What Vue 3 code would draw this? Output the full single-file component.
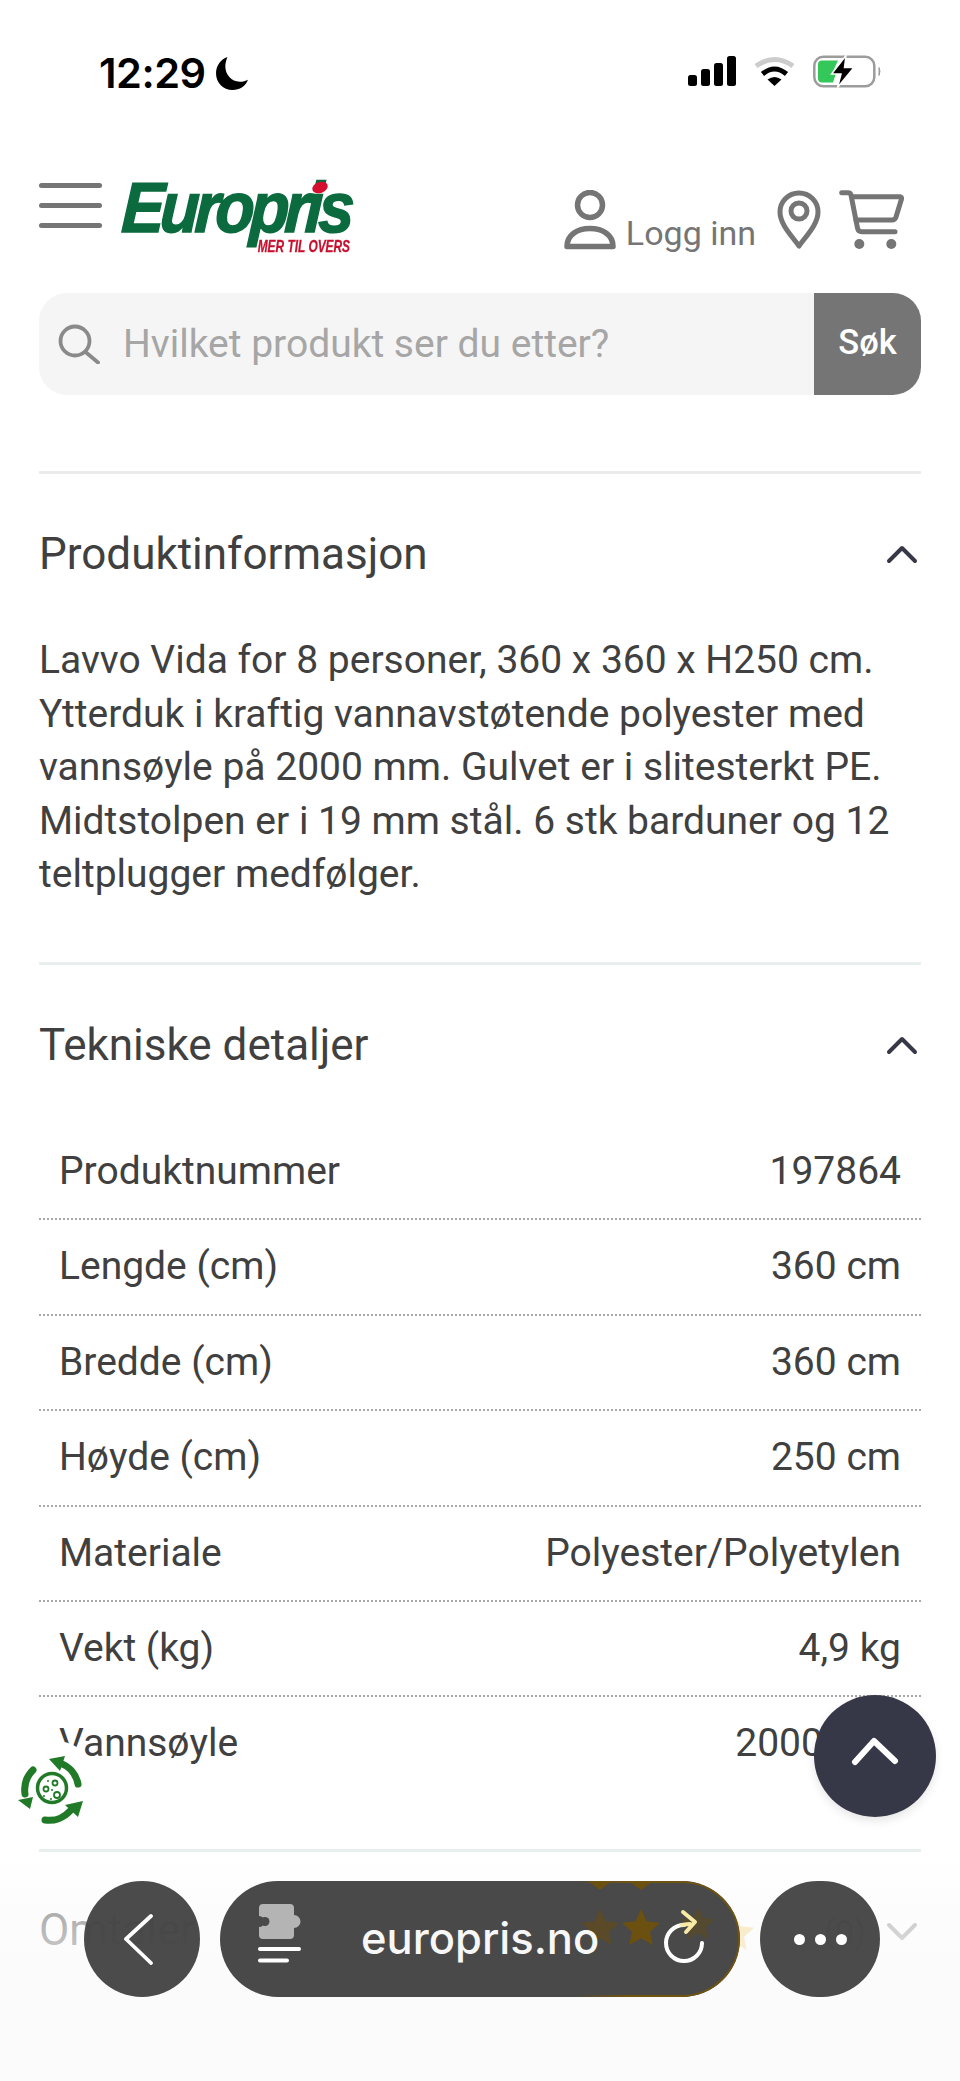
<script setup>
const specs = [
  ['Produktnummer', '197864'],
  ['Lengde (cm)', '360 cm'],
  ['Bredde (cm)', '360 cm'],
  ['Høyde (cm)', '250 cm'],
  ['Materiale', 'Polyester/Polyetylen'],
  ['Vekt (kg)', '4,9 kg'],
  ['Vannsøyle', '2000 mm'],
]
const starPath = 'M20 1l5.6 12.2 13.4 1.5-10 9 2.8 13.2L20 30.2 8.2 36.9 11 23.7 1 14.7l13.4-1.5z'
</script>

<template>
  <div class="page">
    <div class="status">
      <div class="status-left">
        <span class="time">12:29</span>
        <svg class="moon" viewBox="0 0 34 34"><path d="M12 1C6 3 1 9 1 17c0 9 7 16 16 16 7 0 13-4 15-10-2 1-5 2-8 2-8 0-14-7-14-15 0-3 1-6 2-9z" fill="#000"/></svg>
      </div>
      <div class="status-right">
        <svg class="signal" viewBox="0 0 48 30" fill="#000">
          <rect x="0" y="19" width="9" height="11" rx="2.5"/>
          <rect x="13" y="13" width="9" height="17" rx="2.5"/>
          <rect x="26" y="7" width="9" height="23" rx="2.5"/>
          <rect x="39" y="0" width="9" height="30" rx="2.5"/>
        </svg>
        <svg class="wifi" viewBox="0 0 41 30">
          <path d="M2 10Q20.500 -3 39 10" fill="none" stroke="#ccc" stroke-width="5"/>
          <path d="M8.500 18Q20.500 8 32.500 18" fill="none" stroke="#000" stroke-width="5"/>
          <path d="M13.500 23.500Q20.500 18.500 27.500 23.500L20.500 30z" fill="#000"/>
        </svg>
        <svg class="battery" viewBox="0 0 68 33">
          <rect x="1.300" y="1.800" width="60" height="29.500" rx="9" fill="none" stroke="#9c9c9c" stroke-width="2.500"/>
          <path d="M66 12.500q2 3.500 0 8z" fill="#9c9c9c" stroke="#9c9c9c"/>
          <path d="M9 5.500h16l-6 13h4l-3 9H9q-4 0-4-4v-14q0-4 4-4z" fill="#34c759"/>
          <path d="M33 .5 18.500 19H28l-3.500 13.500L41 12.500h-9.500z" fill="#000" stroke="#fff" stroke-width="1.500"/>
        </svg>
      </div>
    </div>

    <header class="head">
      <div class="burger"><i></i><i></i><i></i></div>
      <div class="logo">
        <span class="logo-word">Europris</span>
        <b class="logo-dot"></b>
        <span class="logo-tag">MER TIL OVERS</span>
      </div>
      <div class="head-tools">
        <svg class="ico-user" viewBox="0 0 52 60" fill="none" stroke="#757575" stroke-width="5.500" stroke-linejoin="round">
          <circle cx="26" cy="15" r="12.500"/>
          <path d="M3 56.500C3 45 13 38.500 26 38.500S49 45 49 56.500z"/>
        </svg>
        <span class="login">Logg inn</span>
        <svg class="ico-pin" viewBox="0 0 44 60" fill="none" stroke="#757575" stroke-width="5" stroke-linejoin="round">
          <path d="M22 56C14 45 3 34 3 22a19 19 0 0 1 38 0c0 12-11 23-19 34z"/>
          <circle cx="22" cy="21" r="8"/>
        </svg>
        <svg class="ico-cart" viewBox="0 0 68 60" fill="none" stroke="#757575" stroke-width="5" stroke-linecap="round" stroke-linejoin="round">
          <path d="M3.700 2.700H10q2.500 0 3 2.300l6.500 33q.5 3.700 4.500 3.700h33"/>
          <path d="M14 6.700h48q2 0 1.500 2.300L58 27q-1 3-4 3H18"/>
          <circle cx="21.300" cy="54" r="5" fill="#757575" stroke="none"/>
          <circle cx="53.300" cy="54" r="5" fill="#757575" stroke="none"/>
        </svg>
      </div>
    </header>

    <div class="search">
      <div class="search-field">
        <svg class="ico-search" viewBox="0 0 42 40" fill="none" stroke="#8a8a8a" stroke-width="3.800" stroke-linecap="round">
          <circle cx="17" cy="17" r="14.500"/>
          <path d="M27.500 28 40 38.500"/>
        </svg>
        <span class="placeholder">Hvilket produkt ser du etter?</span>
      </div>
      <div class="search-btn">Søk</div>
    </div>

    <section class="sec sec-info">
      <div class="sec-head">
        <h2>Produktinformasjon</h2>
        <svg class="chev" viewBox="0 0 32 20" fill="none" stroke="#363848" stroke-width="4" stroke-linecap="round" stroke-linejoin="round"><path d="M3 17 16 4l13 13"/></svg>
      </div>
      <p class="body">Lavvo Vida for 8 personer, 360 x 360 x H250 cm. Ytterduk i kraftig vannavstøtende polyester med vannsøyle på 2000 mm. Gulvet er i slitesterkt PE. Midtstolpen er i 19 mm stål. 6 stk barduner og 12 teltplugger medfølger.</p>
    </section>

    <section class="sec sec-tech">
      <div class="sec-head">
        <h2>Tekniske detaljer</h2>
        <svg class="chev" viewBox="0 0 32 20" fill="none" stroke="#363848" stroke-width="4" stroke-linecap="round" stroke-linejoin="round"><path d="M3 17 16 4l13 13"/></svg>
      </div>
      <div class="table">
        <div v-for="row in specs" :key="row[0]" class="row">
          <span>{{ row[0] }}</span>
          <span>{{ row[1] }}</span>
        </div>
      </div>
    </section>

    <section class="sec sec-review">
      <span class="review-title">Omtaler</span>
      <div class="review-right">
        <svg v-for="n in 5" :key="n" class="star" viewBox="0 0 40 38"><path :d="starPath" fill="#f6d27a"/></svg>
        <span class="review-count">(0)</span>
        <svg class="chev-down" viewBox="0 0 32 20" fill="none" stroke="#888" stroke-width="4" stroke-linecap="round" stroke-linejoin="round"><path d="M3 3l13 13L29 3"/></svg>
      </div>
    </section>

    <div class="eco">
      <svg viewBox="0 0 90 90" width="90" height="90">
        <g fill="none" stroke="#217a28" stroke-linecap="round">
          <path d="M68 44A28 28 0 0 0 50 23" stroke-width="7"/>
          <path d="M23 30A28 28 0 0 0 15 54" stroke-width="7"/>
          <path d="M35 80A28 28 0 0 0 60 71" stroke-width="7"/>
          <circle cx="42" cy="48" r="14.500" stroke-width="3.500"/>
          <circle cx="36" cy="49" r="2.500" stroke-width="1.800"/>
          <circle cx="45" cy="43" r="2.500" stroke-width="1.800"/>
          <circle cx="47" cy="55" r="3" stroke-width="1.800"/>
        </g>
        <g fill="#217a28">
          <path d="M39 19 55 16 50 31z"/>
          <path d="M8 60 23 57 20 69z"/>
          <path d="M73 61 55 65 68 77z"/>
          <circle cx="38" cy="41" r="1"/><circle cx="42" cy="50" r="1"/><circle cx="34" cy="56" r="1"/><circle cx="41" cy="59" r="1"/>
        </g>
      </svg>
    </div>

    <div class="fade"></div>

    <div class="to-top">
      <svg viewBox="0 0 48 32" width="48" height="32" fill="none" stroke="#fff" stroke-width="6" stroke-linecap="round" stroke-linejoin="round"><path d="M4 27 23 6l21 20"/></svg>
    </div>

    <nav class="browser">
      <div class="round">
        <svg viewBox="0 0 32 52" width="32" height="52" fill="none" stroke="#fff" stroke-width="3.800" stroke-linecap="round" stroke-linejoin="round"><path d="M28 3 3 26l25 24"/></svg>
      </div>
      <div class="pill">
        <svg class="ext" viewBox="0 0 46 62">
          <path d="M5 1h27q4 0 4 4v7a6.500 6.500 0 0 1 0 13v7q0 4-4 4H5q-4 0-4-4V24a5.500 5.500 0 0 0 0-11V5q0-4 4-4z" fill="#b4b4b4"/>
          <circle cx="7" cy="18.500" r="4.500" fill="#4a4a4a"/>
          <path d="M2 46h39M2 57.500h27" stroke="#fff" stroke-width="4" stroke-linecap="round"/>
        </svg>
        <span class="url">europris.no</span>
        <svg class="pill-stars" viewBox="0 0 145 40" width="145" height="40">
          <path :d="starPath" fill="#5a4a28"/>
          <path :d="starPath" fill="#6b5010" transform="translate(41 0)"/>
          <path :d="starPath" fill="#544a30" transform="translate(100 -2) scale(.9)"/>
        </svg>
        <svg class="pill-edge" viewBox="0 0 100 10" width="100" height="10">
          <path d="M5 0h24l-12 9zM46 0h24l-12 9z" fill="#6b5010"/>
        </svg>
        <svg class="reload" viewBox="0 0 46 54" fill="none" stroke-width="4" stroke-linecap="round" stroke-linejoin="round">
          <path d="M41 27a18 18 0 1 1-18-18" stroke="#fff" transform="translate(0 7)"/>
          <path d="M21 16q6-1 8-1M22 3l12 10-9 10" stroke="#f8eaa4"/>
        </svg>
      </div>
      <div class="round more">
        <i></i><i></i><i></i>
      </div>
    </nav>
  </div>
</template>

<style scoped>
.page {
  position: relative;
  width: 960px;
  height: 2081px;
  overflow: hidden;
  background: #fff;
  font-family: Roboto, "Liberation Sans", sans-serif;
  color: #404040;
}
.status {
  display: flex;
  justify-content: space-between;
  align-items: flex-start;
  height: 183px;
  padding: 55px 79px 0 99px;
  box-sizing: border-box;
}
.status-left { display: flex; align-items: center; gap: 9px; }
.time {
  font-family: Inter, sans-serif;
  font-weight: 600;
  font-size: 41.500px;
  line-height: 36px;
  color: #000;
  letter-spacing: -.5px;
}
.moon { width: 35px; height: 35px; }
.status-right { display: flex; gap: 18px; align-items: flex-start; }
.signal { width: 48px; height: 30px; margin-top: 1px; }
.wifi { width: 41px; height: 30px; margin-top: 1px; }
.battery { width: 68px; height: 33px; }

.head {
  display: flex;
  align-items: flex-start;
  height: 110px;
  padding: 0 54px 0 39px;
}
.burger { display: flex; flex-direction: column; gap: 15px; width: 63px; }
.burger i { display: block; height: 5px; border-radius: 3px; background: #757575; }
.logo { position: relative; width: 232px; height: 68px; margin-left: 20px; }
.logo-word {
  position: absolute;
  left: 2px;
  top: -17px;
  font-family: "Liberation Sans", sans-serif;
  font-weight: 700;
  font-style: italic;
  font-size: 71px;
  line-height: 84px;
  letter-spacing: -5px;
  color: #0b6b3f;
  -webkit-text-stroke: 1.500px #0b6b3f;
  transform: scaleX(.905) skewX(-3deg);
  transform-origin: left top;
  white-space: nowrap;
}
.logo-dot {
  position: absolute;
  left: 190px;
  top: -1px;
  width: 16px;
  height: 11px;
  border-radius: 50%;
  background: #d3112f;
  transform: rotate(-20deg);
}
.logo-tag {
  position: absolute;
  left: 135px;
  top: 55px;
  font-family: "Liberation Sans", sans-serif;
  font-weight: 700;
  font-style: italic;
  font-size: 17px;
  line-height: 17px;
  color: #c8102e;
  white-space: nowrap;
  padding-left: 1px;
  transform: scaleX(.7);
  transform-origin: left top;
  -webkit-text-stroke: .3px #c8102e;
}
.head-tools { display: flex; align-items: flex-start; margin-left: auto; margin-top: 7px; }
.ico-user { width: 52px; height: 60px; }
.login { font-size: 34px; line-height: 40px; margin: 23px 0 0 10px; color: #757575; }
.ico-pin { width: 44px; height: 60px; margin-left: 21px; }
.ico-cart { width: 68px; height: 60px; margin-left: 17px; }

.search {
  display: flex;
  height: 102px;
  margin: 0 39px;
  border-radius: 28px;
  overflow: hidden;
}
.search-field {
  flex: 1;
  display: flex;
  align-items: center;
  padding-left: 19px;
  background: #f5f5f5;
}
.ico-search { width: 42px; height: 40px; }
.placeholder { margin-left: 23px; font-size: 39px; color: #a6a6a6; }
.search-btn {
  display: flex;
  align-items: center;
  justify-content: center;
  width: 107px;
  padding-bottom: 4px;
  box-sizing: border-box;
  background: #757575;
  color: #fff;
  font-size: 34.500px;
  font-weight: 500;
}

.sec {
  margin: 0 39px;
  border-top: 3px solid #e9eeee;
}
.sec-info { margin-top: 76px; border-top-color: #ebebeb; height: 491px; box-sizing: border-box; }
.sec-tech { height: 887px; box-sizing: border-box; }
.sec-head {
  display: flex;
  justify-content: space-between;
  align-items: center;
  height: 160px;
  padding-right: 3px;
}
h2 {
  margin: 0;
  font-weight: 400;
  font-size: 44px;
  line-height: 50px;
  color: #404040;
}
.chev { width: 32px; height: 20px; }
.body {
  margin: 0;
  font-size: 39px;
  line-height: 53.600px;
  color: #404040;
}
.row {
  display: flex;
  justify-content: space-between;
  height: 95.400px;
  box-sizing: border-box;
  padding: 21px 20px 0;
  border-bottom: 2px dotted #a8a8a8;
  font-size: 39px;
  line-height: 50px;
}
.row:last-child { border-bottom: 0; }

.sec-review { display: flex; justify-content: space-between; align-items: center; height: 160px; }
.review-title { font-size: 44px; line-height: 50px; color: #404040; margin-top: -4px; }
.review-right { display: flex; align-items: center; padding-right: 3px; }
.star { width: 40px; height: 38px; margin-left: 1px; }
.review-count { font-size: 34px; margin-left: 68px; margin-right: 20px; }
.chev-down { width: 32px; height: 20px; }

.eco {
  position: absolute;
  left: 1px;
  top: 1740px;
  width: 100px;
  height: 100px;
  border-radius: 50%;
  background: #fff;
}
.eco svg { position: absolute; left: 9px; top: 0; }

.fade {
  position: absolute;
  left: 0;
  right: 0;
  top: 1852px;
  bottom: 0;
  background: linear-gradient(rgba(252, 252, 252, 0), rgba(251, 251, 251, .55) 50px, rgba(250, 250, 250, .72) 100px, #fbfbfb 170px);
}

.to-top {
  position: absolute;
  left: 814px;
  top: 1695px;
  width: 122px;
  height: 122px;
  display: flex;
  align-items: center;
  justify-content: center;
  padding-bottom: 10px;
  box-sizing: border-box;
  border-radius: 50%;
  background: #363848;
  box-shadow: 0 4px 10px rgba(0, 0, 0, .1);
}

.browser {
  position: absolute;
  left: 84px;
  top: 1881px;
  display: flex;
  gap: 20px;
}
.round {
  width: 116px;
  height: 116px;
  border-radius: 50%;
  background: rgba(68, 68, 68, .96);
  display: flex;
  align-items: center;
  justify-content: center;
  padding-right: 6px;
  box-sizing: border-box;
}
.more {
  width: 120px;
  gap: 10px;
  padding: 0;
  border-radius: 60px;
}
.more i {
  display: block;
  width: 11px;
  height: 11px;
  border-radius: 50%;
  background: #fff;
}
.pill {
  position: relative;
  display: flex;
  align-items: center;
  width: 520px;
  height: 116px;
  border-radius: 58px;
  background: #494949;
}
.pill::after {
  content: "";
  position: absolute;
  inset: 0;
  border-radius: inherit;
  border: 2.500px solid #6f5410;
  box-sizing: border-box;
  -webkit-mask-image: linear-gradient(90deg, transparent 68%, #000 78%);
  mask-image: linear-gradient(90deg, transparent 68%, #000 78%);
}
.ext { position: absolute; left: 38px; top: 22px; width: 46px; height: 62px; }
.url {
  position: absolute;
  left: 141px;
  top: 27px;
  z-index: 1;
  font-family: Inter, sans-serif;
  font-weight: 500;
  font-size: 43.500px;
  line-height: 60px;
  color: #f7f7f7;
}
.pill-stars { position: absolute; left: 360px; top: 27px; }
.pill-edge { position: absolute; left: 363px; top: 0; }
.reload { position: absolute; left: 441px; top: 28px; width: 46px; height: 54px; z-index: 1; }
</style>

<style>
html, body { margin: 0; background: #fff; }
</style>
